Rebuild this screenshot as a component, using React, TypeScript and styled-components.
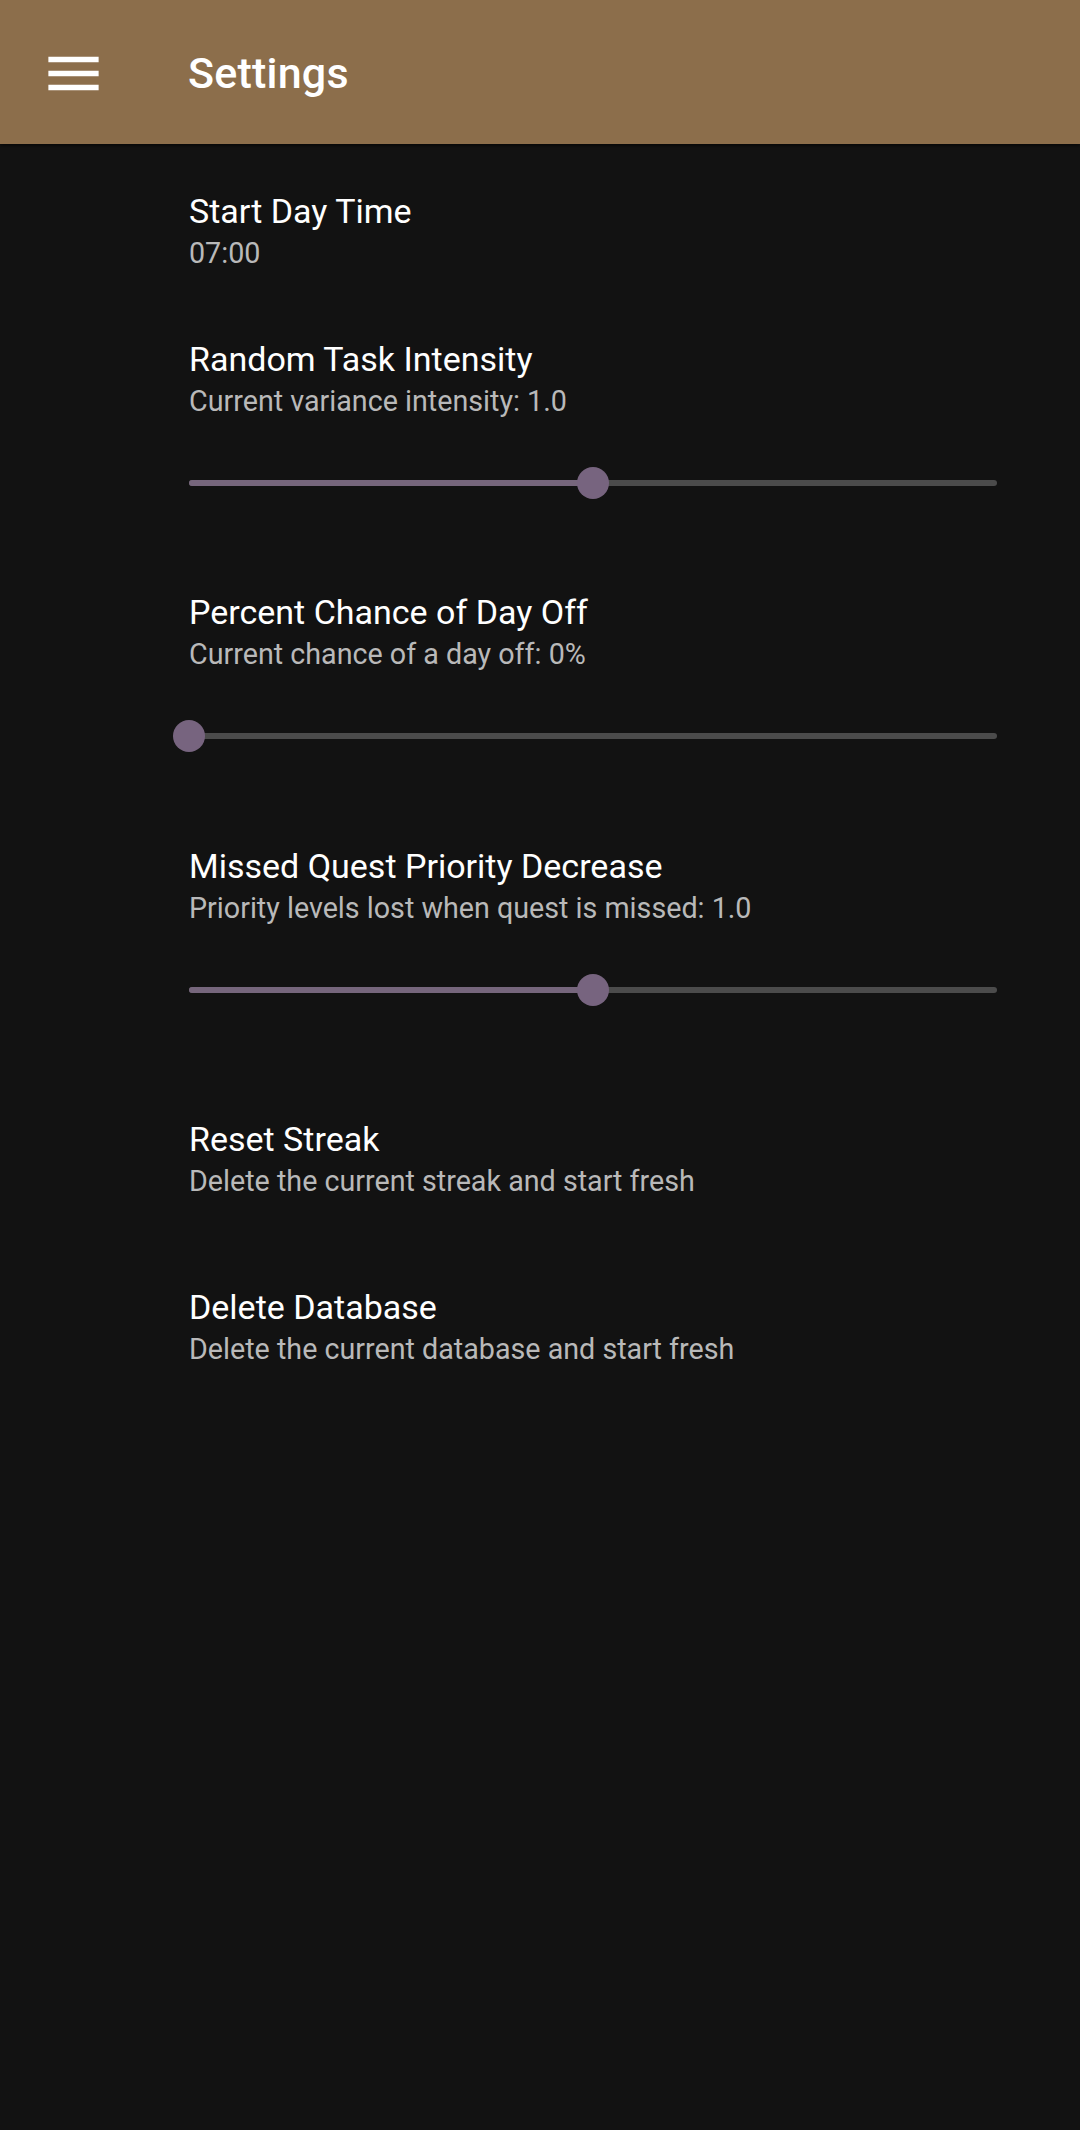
import React from "react";
import styled, { createGlobalStyle } from "styled-components";

const GlobalStyle = createGlobalStyle`
  html, body {
    margin: 0;
    padding: 0;
    background: #121212;
  }
  body {
    font-family: Roboto, "Noto Sans", "Liberation Sans", sans-serif;
    -webkit-font-smoothing: antialiased;
  }
  * { box-sizing: border-box; }
`;

const Screen = styled.div`
  width: 1080px;
  min-height: 2130px;
  background: #121212;
  display: flex;
  flex-direction: column;
`;

const AppBar = styled.header`
  height: 144px;
  background: #8c6e4b;
  display: flex;
  align-items: center;
  padding-left: 40px;
  box-shadow: 0 2px 3px rgba(0, 0, 0, 0.55);
  position: relative;
  z-index: 1;
`;

const MenuButton = styled.button`
  width: 67px;
  height: 67px;
  padding: 0;
  border: none;
  background: transparent;
  display: flex;
  align-items: center;
  justify-content: center;
  color: #ffffff;
  margin-top: 2px;
`;

const Title = styled.h1`
  margin: 0 0 0 81px;
  font-family: Roboto, "Noto Sans", sans-serif;
  font-weight: 500;
  font-size: 43px;
  line-height: 50px;
  color: #ffffff;
  letter-spacing: 0.2px;
  padding-top: 1px;
`;

const List = styled.main`
  display: flex;
  flex-direction: column;
  padding-left: 189px;
  padding-right: 83px;
`;

const Pref = styled.section<{ $gap: number }>`
  display: flex;
  flex-direction: column;
  padding-top: ${(p) => p.$gap}px;
`;

const PrefTitle = styled.div`
  font-size: 34px;
  line-height: 44px;
  color: #ffffff;
  font-weight: 400;
`;

const PrefSummary = styled.div`
  font-size: 28.7px;
  line-height: 40px;
  color: #b9b9b9;
  font-weight: 400;
`;

const SliderBox = styled.div`
  height: 48px;
  margin-top: 38px;
  display: flex;
  align-items: center;
`;

const Track = styled.div`
  position: relative;
  flex: 1;
  height: 6px;
  border-radius: 3px;
  background: #4b4b4b;
`;

const Fill = styled.div`
  height: 100%;
  border-radius: 3px;
  background: #76667c;
`;

const Thumb = styled.div`
  position: absolute;
  top: 50%;
  width: 32px;
  height: 32px;
  border-radius: 50%;
  background: #77647f;
  transform: translate(-50%, -50%);
`;

const MenuIcon = () => (
  <svg width="67" height="67" viewBox="0 0 24 24" fill="currentColor">
    <path d="M3 18h18v-2H3v2zm0-5h18v-2H3v2zm0-7v2h18V6H3z" />
  </svg>
);

type SliderProps = { value: number };
const Slider = ({ value }: SliderProps) => (
  <SliderBox>
    <Track>
      <Fill style={{ width: `${value * 100}%` }} />
      <Thumb style={{ left: `${value * 100}%` }} />
    </Track>
  </SliderBox>
);

type Item = {
  title: string;
  summary: string;
  gap: number;
  slider?: number;
};

const items: Item[] = [
  { title: "Start Day Time", summary: "07:00", gap: 45 },
  {
    title: "Random Task Intensity",
    summary: "Current variance intensity: 1.0",
    gap: 64,
    slider: 0.5,
  },
  {
    title: "Percent Chance of Day Off",
    summary: "Current chance of a day off: 0%",
    gap: 83,
    slider: 0,
  },
  {
    title: "Missed Quest Priority Decrease",
    summary: "Priority levels lost when quest is missed: 1.0",
    gap: 84,
    slider: 0.5,
  },
  {
    title: "Reset Streak",
    summary: "Delete the current streak and start fresh",
    gap: 103,
  },
  {
    title: "Delete Database",
    summary: "Delete the current database and start fresh",
    gap: 84,
  },
];

export default function App() {
  return (
    <>
      <GlobalStyle />
      <Screen>
        <AppBar>
          <MenuButton aria-label="Open navigation">
            <MenuIcon />
          </MenuButton>
          <Title>Settings</Title>
        </AppBar>
        <List>
          {items.map((it) => (
            <Pref key={it.title} $gap={it.gap}>
              <PrefTitle>{it.title}</PrefTitle>
              <PrefSummary>{it.summary}</PrefSummary>
              {it.slider !== undefined && <Slider value={it.slider} />}
            </Pref>
          ))}
        </List>
      </Screen>
    </>
  );
}
